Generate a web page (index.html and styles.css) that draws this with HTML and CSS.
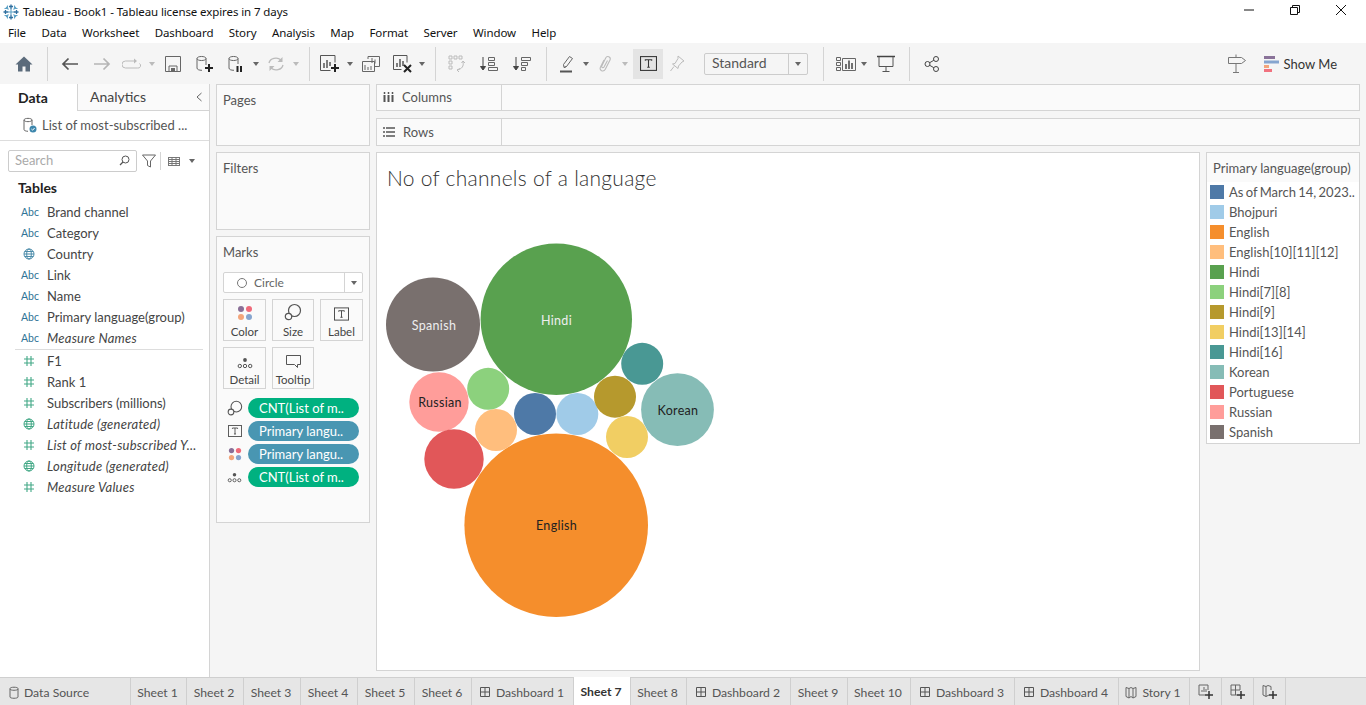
FILE: index.html
```html
<!DOCTYPE html>
<html>
<head>
	<meta charset="utf-8">
	<title>Tableau - Book1</title>
	<link rel="stylesheet" href="styles.css">
</head>
<body>
<svg class="defs" width="0" height="0">
	<symbol id="caret" viewBox="0 0 8 6"><path d="M1 1h6L4 5z" fill="currentColor"/></symbol>
	<symbol id="globe" viewBox="0 0 12 12"><g fill="none" stroke="currentColor"><circle cx="6" cy="6" r="5"/><ellipse cx="6" cy="6" rx="2.3" ry="5"/><path d="M1 6h10M1.8 3.5h8.4M1.8 8.5h8.4"/></g></symbol>
	<symbol id="hash" viewBox="0 0 12 12"><path d="M4 1v10M8 1v10M1 4h10M1 8h10" fill="none" stroke="currentColor" stroke-width="1.1"/></symbol>
	<symbol id="t-box" viewBox="0 0 16 14"><rect x=".5" y=".5" width="15" height="13" fill="none" stroke="currentColor"/><path d="M5 4.5V3.5h6v1M8 3.5v7M6.8 10.5h2.4" fill="none" stroke="currentColor"/></symbol>
	<symbol id="dash" viewBox="0 0 12 12"><path d="M1.5 1.5h9v9h-9zM6 1.500v9M1.5 6h9" fill="none" stroke="currentColor"/></symbol>
	<symbol id="size" viewBox="0 0 18 18"><circle cx="10.5" cy="7.5" r="6" fill="none" stroke="currentColor" stroke-width="1.2"/><circle cx="4.5" cy="13.5" r="3.2" fill="#fafafa" stroke="currentColor" stroke-width="1.2"/></symbol>
	<symbol id="detail" viewBox="0 0 16 12"><circle cx="8" cy="3" r="1.9" fill="currentColor"/><g fill="none" stroke="currentColor"><circle cx="2.8" cy="9" r="1.7"/><circle cx="8" cy="9" r="1.7"/><circle cx="13.2" cy="9" r="1.7"/></g></symbol>
	<symbol id="color" viewBox="0 0 16 16"><circle cx="4" cy="4" r="3" fill="#8a6f97"/><circle cx="12" cy="4" r="3" fill="#ef6a7a"/><circle cx="4" cy="12" r="3" fill="#f3a57b"/><circle cx="12" cy="12" r="3" fill="#86a5cf"/></symbol>
</svg>

<div class="app">
	<div class="titlebar">
		<svg class="logo" width="16" height="16" viewBox="0 0 16 16"><g stroke="#2f6f9f" stroke-width="1.3"><path d="M8 .5v5M6 2.500h4M8 10.500v5M6 13.500h4M.5 8h5M2.500 6v4M10.500 8h5M13.500 6v4"/></g><g stroke="#5fa3c7" stroke-width="1.1"><path d="M8 5.500v5M5.500 8h5M3 3l2.500 2.500M13 3l-2.500 2.500M3 13l2.500-2.500M13 13l-2.500-2.500M1.500 4.500h3M4.500 1.500v3M11.500 1.500v3M11.500 4.500h3M1.500 11.500h3M4.500 11.500v3M11.500 11.500v3M11.500 11.500h3"/></g></svg>
		<span class="app-name">Tableau - Book1 - Tableau license expires in 7 days</span>
		<div class="winctl">
			<svg width="12" height="12" viewBox="0 0 12 12"><path d="M1 6h10" stroke="#111"/></svg>
			<svg width="12" height="12" viewBox="0 0 12 12"><path d="M1.500 3.500h7v7h-7zM3.500 3.500v-2h7v7h-2" fill="none" stroke="#111"/></svg>
			<svg width="12" height="12" viewBox="0 0 12 12"><path d="M1 1l10 10M11 1L1 11" stroke="#111"/></svg>
		</div>
	</div>

	<div class="menubar">
		<span>File</span><span>Data</span><span>Worksheet</span><span>Dashboard</span><span>Story</span><span>Analysis</span><span>Map</span><span>Format</span><span>Server</span><span>Window</span><span>Help</span>
	</div>

	<div class="toolbar">
		<div class="tb w32"><svg width="18" height="16" viewBox="0 0 18 16"><path d="M9 .5L.5 8.500H3V15.500h4.500V10.500h3V15.500H15V8.500h2.500z" fill="#5b6b7b"/></svg></div>
		<i class="sep s7"></i>
		<div class="tb w32 ml6"><svg width="18" height="14" viewBox="0 0 18 14"><path d="M17 7H2M7.500 1.500L2 7l5.500 5.500" fill="none" stroke="#555" stroke-width="1.700"/></svg></div>
		<div class="tb w32"><svg width="18" height="14" viewBox="0 0 18 14"><path d="M1 7h15M10.500 1.500L16 7l-5.500 5.500" fill="none" stroke="#b5b5b5" stroke-width="1.700"/></svg></div>
		<div class="tb w28"><svg width="20" height="12" viewBox="0 0 20 12"><path d="M13 3H3.500a2.500 2.500 0 0 0 0 7h12a2.500 2.500 0 0 0 2-4.500" fill="none" stroke="#bbb"/><path d="M12 .5l3 2.500-3 2.500z" fill="#bbb"/></svg></div>
		<svg class="car w12 off"><use href="#caret"/></svg>
		<div class="tb w30"><svg width="16" height="16" viewBox="0 0 16 16"><path d="M.5.500h15v15H.5zM4 15V10h8v5" fill="none" stroke="#666"/><path d="M6 12h4v3H6z" fill="#666"/></svg></div>
		<div class="tb w34"><svg width="18" height="18" viewBox="0 0 18 18"><path d="M1 3.500C1 .8 10 .8 10 3.500V10M1 3.500V13c0 1.500 2 2.300 5 2.300M1 3.500c0 2.700 9 2.700 9 0" fill="none" stroke="#666"/><path d="M13 9v8M9 13h8" stroke="#222" stroke-width="2"/></svg></div>
		<div class="tb w28"><svg width="18" height="18" viewBox="0 0 18 18"><path d="M2 3.500C2 .8 11 .8 11 3.500V9M2 3.500V13c0 1.500 2 2.300 5 2.300M2 3.500c0 2.700 9 2.700 9 0" fill="none" stroke="#666"/><path d="M10.500 11v6M14 11v6" stroke="#222" stroke-width="2"/></svg></div>
		<svg class="car w12"><use href="#caret"/></svg>
		<div class="tb w28"><svg width="18" height="16" viewBox="0 0 18 16"><path d="M2 7a7 6 0 0 1 12-3M16 9a7 6 0 0 1-12 3" fill="none" stroke="#bbb" stroke-width="1.300"/><path d="M15.500 1v5h-5zM2.500 15v-5h5z" fill="#bbb"/></svg></div>
		<svg class="car w12 off"><use href="#caret"/></svg>
		<i class="sep s7"></i>
		<div class="tb w32 ml4"><svg width="20" height="18" viewBox="0 0 20 18"><path d="M15 .5H.5v15h10" fill="none" stroke="#555"/><path d="M15 .5v7" stroke="#555"/><path d="M4 8v5M7 5v8M10 7v4" stroke="#555" stroke-width="1.500"/><path d="M15 9v8M11 13h8" stroke="#222" stroke-width="2"/></svg></div>
		<svg class="car w8"><use href="#caret"/></svg>
		<div class="tb w34"><svg width="18" height="16" viewBox="0 0 18 16"><path d="M6 3V.5h11.500v10H13M.5 5.500h12v10H.5z" fill="#f5f5f5" stroke="#666"/><path d="M10 2v5M13 3.500v4M3 9v5M6 11v3M9 10v4" stroke="#666"/></svg></div>
		<div class="tb w30"><svg width="20" height="18" viewBox="0 0 20 18"><path d="M14 .5H.5v14h8" fill="none" stroke="#555"/><path d="M14 .5v7" stroke="#555"/><path d="M4 8v4M7 4v8M10 6v5" stroke="#555" stroke-width="1.500"/><path d="M11 10l7 7M18 10l-7 7" stroke="#222" stroke-width="2"/></svg></div>
		<svg class="car w8"><use href="#caret"/></svg>
		<i class="sep s9"></i>
		<div class="tb w30 ml6"><svg width="18" height="18" viewBox="0 0 18 18"><path d="M1 1h3v3H1zM6 1h3v3H6zM11 1h3v3h-3zM1 6h3v3H1zM1 11h3v3H1z" fill="none" stroke="#bbb"/><path d="M15 7c1 4-1 7-6 8M12 13.500L9 15l2 2M13.500 8L15 6l2 2" fill="none" stroke="#bbb"/></svg></div>
		<div class="tb w34"><svg width="18" height="16" viewBox="0 0 18 16"><path d="M3 1v12M.5 10.500L3 14l2.500-3.500z" fill="#444" stroke="#444"/><path d="M8.500 1.500h6v3h-6zM8.500 6.500h6v3h-6zM8.500 11.500h9v3h-9z" fill="none" stroke="#666"/></svg></div>
		<div class="tb w32"><svg width="18" height="16" viewBox="0 0 18 16"><path d="M3 1v12M.5 10.500L3 14l2.500-3.500z" fill="#444" stroke="#444"/><path d="M8.500 1.500h9v3h-9zM8.500 6.500h6v3h-6zM8.500 11.500h4v3h-4z" fill="none" stroke="#666"/></svg></div>
		<i class="sep s8"></i>
		<div class="tb w30 ml5"><svg width="16" height="18" viewBox="0 0 16 18"><path d="M5 12.500l-.5-3L10.500 1.500l3 2L7.500 11.500zM5 12.500l2.500-1" fill="none" stroke="#666"/><path d="M1 16.500h12" stroke="#555" stroke-width="2"/></svg></div>
		<svg class="car w8"><use href="#caret"/></svg>
		<div class="tb w30"><svg width="14" height="18" viewBox="0 0 14 18"><path d="M6 5L2.500 12c-1.800 3.500 3 5.500 4.800 2.200L12 5c1.300-3-3-4.800-4.300-2L3.800 11c-.7 1.500 1.400 2.400 2.200 1L9.500 5.500" fill="none" stroke="#bbb" stroke-width="1.100"/></svg></div>
		<svg class="car w10 off"><use href="#caret"/></svg>
		<div class="tb w30 active ml3"><svg width="17" height="15" color="#333"><use href="#t-box"/></svg></div>
		<div class="tb w28"><svg width="16" height="18" viewBox="0 0 16 18"><path d="M9 1l6 5-2 1-3.500 4L9 13.500 3.500 9l2.500-.5L9 3.500zM5 11.500L1.500 16" fill="none" stroke="#bbb"/></svg></div>
		<div class="std-select">
			<span>Standard</span>
			<div class="std-drop"><svg class="car w8"><use href="#caret"/></svg></div>
		</div>
		<i class="sep s15"></i>
		<div class="tb w28 ml8"><svg width="20" height="16" viewBox="0 0 20 16"><path d="M.5 1.500h4v3h-4zM.5 6.500h4v3h-4zM.5 11.500h4v3h-4zM6.500 2.500h13v12h-13z" fill="none" stroke="#666"/><path d="M10 8v5M13 4.500V13M16 7v6" stroke="#444" stroke-width="1.500"/></svg></div>
		<svg class="car w8"><use href="#caret"/></svg>
		<div class="tb w36"><svg width="18" height="18" viewBox="0 0 18 18"><path d="M0 1.500h18" stroke="#444" stroke-width="1.500"/><path d="M2 2v9.500h14V2M9 11.500v5M5.500 16.500h7" fill="none" stroke="#555"/></svg></div>
		<i class="sep s5"></i>
		<div class="tb w32 ml6"><svg width="16" height="16" viewBox="0 0 16 16"><g fill="none" stroke="#444"><circle cx="3.500" cy="8" r="2.500"/><circle cx="12" cy="3" r="2.500"/><circle cx="12" cy="13" r="2.500"/><path d="M5.700 6.700l4.100-2.400M5.700 9.300l4.100 2.400"/></g></svg></div>
		<div class="tb-right">
			<svg width="18" height="20" viewBox="0 0 18 20"><path d="M.5 3.500h13l4 3-4 3H.5zM8 .5v3M8 9.500v9M5 18.500h6" fill="none" stroke="#777"/></svg>
			<span class="showme">
				<svg width="15" height="16" viewBox="0 0 15 16"><path d="M0 0h11v3H0z" fill="#8a7399"/><path d="M0 4.500h15v3H0z" fill="#86a5cf"/><path d="M0 9h5v3H0z" fill="#f3a57b"/><path d="M0 13h8v3H0z" fill="#f1727f"/></svg>
				Show Me
			</span>
		</div>
	</div>

	<div class="main">
		<div class="datapane">
			<div class="pane-tabs">
				<div class="pane-tab selected">Data</div>
				<div class="pane-tab">Analytics<svg class="chev" width="8" height="10" viewBox="0 0 8 10"><path d="M6.500 1L2 5l4.500 4" fill="none" stroke="#666"/></svg></div>
			</div>
			<div class="source">
				<svg width="14" height="16" viewBox="0 0 14 16"><path d="M1 3C1 .8 9 .8 9 3v5M1 3v9.500c0 1 1.500 1.700 4 1.800M1 3c0 2.200 8 2.200 8 0" fill="none" stroke="#666"/><circle cx="10" cy="12" r="3.500" fill="#3d87ad"/><path d="M8.400 12l1.200 1.200 2-2.200" fill="none" stroke="#fff"/></svg>
				<span>List of most-subscribed ...</span>
			</div>
			<div class="search-row">
				<div class="search">
					<span>Search</span>
					<svg width="11" height="11" viewBox="0 0 11 11"><circle cx="6.500" cy="4.500" r="3.500" fill="none" stroke="#555"/><path d="M4 7l-3 3" stroke="#555" stroke-width="1.300"/></svg>
				</div>
				<svg class="funnel" width="14" height="14" viewBox="0 0 14 14"><path d="M.5 1h13L8.500 7v6l-3-1.500V7z" fill="none" stroke="#666"/></svg>
				<i class="vsep"></i>
				<svg class="gridic" width="12" height="9" viewBox="0 0 12 9"><path d="M0 .5h12M0 2.500h12M0 4.500h12M0 6.500h12M0 8.500h12M.5 0v9M4 0v9M8 0v9M11.500 0v9" stroke="#777" fill="none"/></svg>
				<svg class="car w8 grid-car"><use href="#caret"/></svg>
			</div>
			<div class="tables">Tables</div>
			<ul class="fields">
				<li><b class="abc">Abc</b>Brand channel</li>
				<li><b class="abc">Abc</b>Category</li>
				<li><svg class="fic dim"><use href="#globe"/></svg>Country</li>
				<li><b class="abc">Abc</b>Link</li>
				<li><b class="abc">Abc</b>Name</li>
				<li><b class="abc">Abc</b>Primary language(group)</li>
				<li class="calc"><b class="abc">Abc</b>Measure Names</li>
			</ul>
			<ul class="fields measures">
				<li><svg class="fic mea"><use href="#hash"/></svg>F1</li>
				<li><svg class="fic mea"><use href="#hash"/></svg>Rank 1</li>
				<li><svg class="fic mea"><use href="#hash"/></svg>Subscribers (millions)</li>
				<li class="calc"><svg class="fic mea"><use href="#globe"/></svg>Latitude (generated)</li>
				<li class="calc"><svg class="fic mea"><use href="#hash"/></svg>List of most-subscribed Y...</li>
				<li class="calc"><svg class="fic mea"><use href="#globe"/></svg>Longitude (generated)</li>
				<li class="calc"><svg class="fic mea"><use href="#hash"/></svg>Measure Values</li>
			</ul>
		</div>

		<div class="workspace">
			<div class="cards">
				<div class="card pages">Pages</div>
				<div class="card filters">Filters</div>
				<div class="card marks">
					Marks
					<div class="mark-type">
						<span class="ring"></span><span class="mark-name">Circle</span>
						<div class="mark-drop"><svg class="car w8"><use href="#caret"/></svg></div>
					</div>
					<div class="mark-btns">
						<div class="mbtn"><svg width="16" height="16"><use href="#color"/></svg>Color</div>
						<div class="mbtn"><svg width="18" height="18" color="#555"><use href="#size"/></svg>Size</div>
						<div class="mbtn"><svg width="15" height="14" color="#444"><use href="#t-box"/></svg>Label</div>
						<div class="mbtn"><svg width="16" height="12" color="#555"><use href="#detail"/></svg>Detail</div>
						<div class="mbtn"><svg width="15" height="15" viewBox="0 0 15 15"><path d="M.5 1.500h14v9h-3v3l-3-3H.5z" fill="none" stroke="#555"/></svg>Tooltip</div>
					</div>
					<div class="pills">
						<div class="pill-row"><svg width="16" height="16" color="#555"><use href="#size"/></svg><span class="pill green">CNT(List of m..</span></div>
						<div class="pill-row"><svg width="14" height="12" color="#444"><use href="#t-box"/></svg><span class="pill blue">Primary langu..</span></div>
						<div class="pill-row"><svg width="14" height="14"><use href="#color"/></svg><span class="pill blue">Primary langu..</span></div>
						<div class="pill-row"><svg width="15" height="11" color="#555"><use href="#detail"/></svg><span class="pill green">CNT(List of m..</span></div>
					</div>
				</div>
			</div>

			<div class="sheet">
				<div class="shelf columns">
					<div class="shelf-name"><svg width="11" height="10" viewBox="0 0 11 10"><path d="M1.500 3v7M5.500 3v7M9.500 3v7" stroke="#555" stroke-width="2"/><path d="M1.500 0v2M5.500 0v2M9.500 0v2" stroke="#555" stroke-width="1.500"/></svg>Columns</div>
				</div>
				<div class="shelf rows">
					<div class="shelf-name"><svg width="12" height="10" viewBox="0 0 12 10"><path d="M0 1h2M3 1h9M0 5h2M3 5h9M0 9h2M3 9h9" stroke="#555" stroke-width="1.600"/></svg>Rows</div>
				</div>
				<div class="view-row">
					<div class="chart">
						<h1 class="chart-title">No of channels of a language</h1>
						<svg class="bubbles" viewBox="377 199 822 471">
							<circle cx="556.3" cy="319.3" r="75.7" fill="#59a14f"/>
							<circle cx="556.2" cy="525.3" r="91.8" fill="#f58e2c"/>
							<circle cx="433" cy="324.5" r="47" fill="#79706e"/>
							<circle cx="439" cy="402" r="29.7" fill="#ff9d9a"/>
							<circle cx="454" cy="459" r="29.7" fill="#e15759"/>
							<circle cx="677.5" cy="409.7" r="36.4" fill="#86bcb6"/>
							<circle cx="488.2" cy="388.8" r="21" fill="#8cd17d"/>
							<circle cx="496" cy="430" r="21" fill="#ffbe7d"/>
							<circle cx="535" cy="414" r="21" fill="#4e79a7"/>
							<circle cx="577.3" cy="414" r="21" fill="#a0cbe8"/>
							<circle cx="615" cy="396.7" r="21" fill="#b6992d"/>
							<circle cx="627" cy="437" r="21" fill="#f1ce63"/>
							<circle cx="642.2" cy="363.8" r="21" fill="#499894"/>
							<text x="556.5" y="325" class="lbl light">Hindi</text>
							<text x="556.5" y="530" class="lbl">English</text>
							<text x="434" y="330" class="lbl light">Spanish</text>
							<text x="440" y="407" class="lbl">Russian</text>
							<text x="678" y="415" class="lbl">Korean</text>
						</svg>
					</div>
					<div class="legend">
						<div class="legend-head">Primary language(group)</div>
						<ul class="legend-list">
							<li><i class="sw c1"></i>As of March 14, 2023..</li>
							<li><i class="sw c2"></i>Bhojpuri</li>
							<li><i class="sw c3"></i>English</li>
							<li><i class="sw c4"></i>English[10][11][12]</li>
							<li><i class="sw c5"></i>Hindi</li>
							<li><i class="sw c6"></i>Hindi[7][8]</li>
							<li><i class="sw c7"></i>Hindi[9]</li>
							<li><i class="sw c8"></i>Hindi[13][14]</li>
							<li><i class="sw c9"></i>Hindi[16]</li>
							<li><i class="sw c10"></i>Korean</li>
							<li><i class="sw c11"></i>Portuguese</li>
							<li><i class="sw c12"></i>Russian</li>
							<li><i class="sw c13"></i>Spanish</li>
						</ul>
					</div>
				</div>
			</div>
		</div>
	</div>

	<div class="tabs">
		<div class="tab t131 ds"><svg width="10" height="13" viewBox="0 0 10 13"><path d="M1 2.500C1 .8 9 .8 9 2.500V11c0 1.700-8 1.700-8 0zM1 3c0 1.700 8 1.700 8 0" fill="none" stroke="#666"/></svg>Data Source</div>
		<div class="tab t56">Sheet 1</div>
		<div class="tab t57">Sheet 2</div>
		<div class="tab t57">Sheet 3</div>
		<div class="tab t57">Sheet 4</div>
		<div class="tab t57">Sheet 5</div>
		<div class="tab t57">Sheet 6</div>
		<div class="tab t102"><svg width="12" height="12"><use href="#dash"/></svg>Dashboard 1</div>
		<div class="tab t57 current">Sheet 7</div>
		<div class="tab t56">Sheet 8</div>
		<div class="tab t104"><svg width="12" height="12"><use href="#dash"/></svg>Dashboard 2</div>
		<div class="tab t57">Sheet 9</div>
		<div class="tab t63">Sheet 10</div>
		<div class="tab t104"><svg width="12" height="12"><use href="#dash"/></svg>Dashboard 3</div>
		<div class="tab t104"><svg width="12" height="12"><use href="#dash"/></svg>Dashboard 4</div>
		<div class="tab t71"><svg width="12" height="13" viewBox="0 0 12 13"><path d="M1 1.500l3 1 2-1 2 1 3-1v9l-3 1.500-2-1.500-2 1.500-3-1.500zM4 2.500v9.500M8 2.500v9.500" fill="none" stroke="#666"/></svg>Story 1</div>
		<div class="tab t32 add"><svg width="16" height="16" viewBox="0 0 16 16"><path d="M10 1H1v10h6M10 1v5M4 8V6M6 8V3M8 8V5" fill="none" stroke="#666"/><path d="M11 7v8M7 11h8" stroke="#333" stroke-width="1.500"/></svg></div>
		<div class="tab t32 add"><svg width="16" height="16" viewBox="0 0 16 16"><path d="M10 6V1H1v10h6M1 6h9M5.500 1v10" fill="none" stroke="#666"/><path d="M11 7v8M7 11h8" stroke="#333" stroke-width="1.500"/></svg></div>
		<div class="tab t32 add"><svg width="16" height="16" viewBox="0 0 16 16"><path d="M1 1.500l3 1 2-1 3 1V6M1 1.500V11l3 1.500 3-1.500M4 2.500v10" fill="none" stroke="#666"/><path d="M11 7v8M7 11h8" stroke="#333" stroke-width="1.500"/></svg></div>
	</div>
</div>
</body>
</html>
```

FILE: styles.css
```css
* {
	box-sizing: border-box;
}

body {
	margin: 0;
	background-color: #fff;
	font-family: "Lato", "Liberation Sans", sans-serif;
	font-size: 13px;
	color: #444;
	overflow: hidden;
}

ul {
	list-style: none;
	margin: 0;
	padding: 0;
}

.defs {
	position: absolute;
}

.app {
	display: flex;
	flex-direction: column;
	width: 1366px;
	height: 705px;
}

/* ########## title + menu */
.titlebar {
	display: flex;
	align-items: center;
	height: 21px;
	padding: 2px 0 0 3px;
	font-family: "Noto Sans", sans-serif;
	font-size: 11.5px;
	letter-spacing: -0.1px;
	color: #111;
}

.app-name {
	margin-left: 4px;
}

.winctl {
	display: flex;
	gap: 34px;
	margin-left: auto;
	margin-right: 19px;
	margin-top: -3px;
}

.menubar {
	display: flex;
	gap: 15.5px;
	align-items: center;
	height: 22px;
	padding: 1px 0 0 8px;
	font-family: "Noto Sans", sans-serif;
	font-size: 11.5px;
	letter-spacing: -0.1px;
	color: #111;
}

/* ########## toolbar */
.toolbar {
	display: flex;
	align-items: center;
	height: 41px;
	padding-left: 8px;
	background-color: #f5f5f5;
}

.tb {
	display: flex;
	align-items: center;
	justify-content: center;
	flex: none;
	height: 30px;
}

.active {
	background-color: #e4e4e4;
}

.w28 { width: 28px; }
.w30 { width: 30px; }
.w32 { width: 32px; }
.w34 { width: 34px; }
.w36 { width: 36px; }
.ml3 { margin-left: 3px; }
.ml4 { margin-left: 4px; }
.ml5 { margin-left: 5px; }
.ml6 { margin-left: 6px; }
.ml8 { margin-left: 8px; }

.sep {
	flex: none;
	width: 1px;
	height: 34px;
	background-color: #d4d4d4;
}

.s5 { margin-left: 5px; }
.s7 { margin-left: 7px; }
.s8 { margin-left: 8px; }
.s9 { margin-left: 9px; }
.s15 { margin-left: 15px; }

.car {
	flex: none;
	height: 6px;
	color: #666;
}

.car.w8 { width: 8px; }
.car.w10 { width: 10px; }
.car.w12 { width: 12px; }
.off { color: #bbb; }

.std-select {
	display: flex;
	align-items: center;
	justify-content: space-between;
	flex: none;
	width: 104px;
	height: 22px;
	margin-left: 13px;
	padding-left: 7px;
	border: 1px solid #ccc;
	border-radius: 2px;
	font-size: 14px;
	color: #555;
}

.std-select span {
	margin-top: -2px;
}

.std-drop {
	display: flex;
	align-items: center;
	justify-content: center;
	width: 19px;
	height: 100%;
	border-left: 1px solid #ccc;
}

.tb-right {
	display: flex;
	align-items: center;
	gap: 18px;
	margin-left: auto;
	margin-right: 29px;
}

.showme {
	display: flex;
	align-items: center;
	gap: 5px;
	font-size: 13px;
	color: #333;
}

/* ########## left data pane */
.main {
	display: flex;
	flex: 1;
	min-height: 0;
}

.datapane {
	flex: none;
	width: 210px;
	border-right: 1px solid #d4d4d4;
	background-color: #fff;
}

.pane-tabs {
	display: flex;
	height: 27px;
}

.pane-tab {
	display: flex;
	align-items: center;
	flex: 1;
	padding: 0 0 1px 12px;
	font-size: 14px;
	border-left: 1px solid #d4d4d4;
	border-bottom: 1px solid #d4d4d4;
	background-color: #fafafa;
}

.pane-tab.selected {
	flex: none;
	width: 77px;
	padding-left: 18px;
	border: 0;
	background-color: #fff;
	font-weight: 700;
	color: #222;
}

.chev {
	margin-left: auto;
	margin-right: 6px;
}

.source {
	display: flex;
	align-items: center;
	gap: 5px;
	height: 30px;
	padding: 0 0 2px 23px;
	border-bottom: 1px solid #ddd;
	color: #555;
}

.search-row {
	display: flex;
	align-items: center;
	height: 22px;
	margin-top: 9px;
	padding-left: 8px;
}

.search {
	display: flex;
	align-items: center;
	justify-content: space-between;
	width: 129px;
	height: 22px;
	padding: 0 6px 2px;
	border: 1px solid #ccc;
	border-radius: 2px;
	color: #aaa;
}

.funnel {
	margin-left: 5px;
}

.vsep {
	width: 1px;
	height: 18px;
	margin-left: 4px;
	background-color: #d4d4d4;
}

.gridic {
	margin-left: 7px;
}

.grid-car {
	margin-left: 8px;
}

.tables {
	margin-top: 7px;
	padding-left: 18px;
	font-size: 14px;
	font-weight: 700;
	line-height: 18px;
	color: #222;
}

.fields {
	margin-top: 4px;
}

.fields li {
	display: flex;
	align-items: center;
	height: 21px;
	color: #444;
}

.fields .calc {
	font-style: italic;
	letter-spacing: 0.25px;
}

.measures {
	margin: 1px 6px 0 15px;
	border-top: 1px solid #ddd;
}

.measures li {
	margin-left: -15px;
}

.abc {
	flex: none;
	width: 47px;
	padding-left: 21px;
	font-size: 10.5px;
	font-weight: 400;
	font-style: normal;
	letter-spacing: 0;
	color: #2f7396;
}

.fic {
	flex: none;
	width: 12px;
	height: 12px;
	margin: 0 12px 0 23px;
}

.dim { color: #4c8caa; }
.mea { color: #42a886; }

/* ########## shelves */
.workspace {
	display: flex;
	flex: 1;
	gap: 6px;
	padding: 0 6px;
	background-color: #f5f5f5;
}

.cards {
	display: flex;
	flex-direction: column;
	flex: none;
	gap: 6px;
	width: 154px;
}

.card {
	padding: 8px 6px;
	border: 1px solid #d4d4d4;
	background-color: #fafafa;
	font-size: 13px;
	line-height: 15px;
	color: #555;
}

.pages { height: 62px; }
.filters { height: 78px; }
.marks { height: 287px; }

.mark-type {
	display: flex;
	align-items: center;
	height: 21px;
	margin-top: 12px;
	padding-left: 13px;
	border: 1px solid #d4d4d4;
	border-radius: 2px;
	background-color: #fff;
	font-size: 12px;
	color: #666;
}

.ring {
	width: 10px;
	height: 10px;
	border: 1px solid #777;
	border-radius: 50%;
}

.mark-name {
	margin-left: 7px;
}

.mark-drop {
	display: flex;
	align-items: center;
	justify-content: center;
	width: 18px;
	height: 100%;
	margin-left: auto;
	border-left: 1px solid #d4d4d4;
}

.mark-btns {
	display: grid;
	grid-template-columns: 43px 42px 43px;
	grid-auto-rows: 42px;
	gap: 6px;
	width: 140px;
	margin-top: 6px;
}

.mbtn {
	display: flex;
	flex-direction: column;
	align-items: center;
	justify-content: flex-end;
	gap: 4px;
	padding-bottom: 1px;
	border: 1px solid #d4d4d4;
	font-size: 11.5px;
	line-height: 14px;
	color: #444;
}

.pills {
	display: flex;
	flex-direction: column;
	gap: 3px;
	margin-top: 9px;
}

.pill-row {
	position: relative;
	display: flex;
	align-items: center;
	justify-content: center;
	width: 136px;
	height: 20px;
	padding-right: 113px;
}

.pill {
	position: absolute;
	left: 25px;
	width: 111px;
	height: 20px;
	padding-left: 11px;
	border-radius: 10px;
	font-size: 13px;
	line-height: 20px;
	color: #fff;
	white-space: nowrap;
}

.green { background-color: #00b180; }
.blue { background-color: #4996b2; }

/* ########## sheet */
.sheet {
	display: flex;
	flex-direction: column;
	flex: 1;
	min-width: 0;
}

.shelf {
	flex: none;
	border: 1px solid #d4d4d4;
	background-color: #fafafa;
}

.columns {
	height: 27px;
}

.rows {
	height: 28px;
	margin-top: 7px;
}

.shelf-name {
	display: flex;
	align-items: center;
	gap: 8px;
	width: 125px;
	height: 100%;
	padding: 0 0 1px 6px;
	border-right: 1px solid #d4d4d4;
	color: #555;
}

.view-row {
	display: flex;
	gap: 6px;
	height: 519px;
	margin-top: 6px;
}

.chart {
	flex: none;
	width: 824px;
	border: 1px solid #d4d4d4;
	background-color: #fff;
}

.chart-title {
	height: 46px;
	margin: 0;
	padding: 13px 0 0 10px;
	font-size: 21px;
	font-weight: 300;
	letter-spacing: 0.27px;
	line-height: 24px;
	color: #333;
}

.bubbles {
	display: block;
	width: 822px;
	height: 471px;
}

.lbl {
	font-family: "Lato", sans-serif;
	font-size: 12.5px;
	letter-spacing: 0.3px;
	text-anchor: middle;
	fill: #222;
}

.lbl.light {
	fill: #eee;
}

.legend {
	flex: none;
	width: 154px;
	height: 292px;
	border: 1px solid #d4d4d4;
	background-color: #fff;
}

.legend-head {
	height: 29px;
	padding: 8px 0 0 6px;
	background-color: #fafafa;
	font-size: 13px;
	line-height: 15px;
	color: #555;
	white-space: nowrap;
}

.legend-list {
	padding-left: 3px;
}

.legend-list li {
	display: flex;
	align-items: center;
	gap: 5px;
	height: 20px;
	font-size: 13px;
	word-spacing: -1px;
	color: #555;
	white-space: nowrap;
}

.sw {
	flex: none;
	width: 14px;
	height: 14px;
}

.c1 { background-color: #4e79a7; }
.c2 { background-color: #a0cbe8; }
.c3 { background-color: #f58e2c; }
.c4 { background-color: #ffbe7d; }
.c5 { background-color: #59a14f; }
.c6 { background-color: #8cd17d; }
.c7 { background-color: #b6992d; }
.c8 { background-color: #f1ce63; }
.c9 { background-color: #499894; }
.c10 { background-color: #86bcb6; }
.c11 { background-color: #e15759; }
.c12 { background-color: #ff9d9a; }
.c13 { background-color: #79706e; }

/* ########## bottom tabs */
.tabs {
	display: flex;
	flex: none;
	height: 28px;
	border-top: 1px solid #cfcfcf;
	background-color: #e6e6e6;
}

.tab {
	display: flex;
	align-items: center;
	justify-content: center;
	flex: none;
	gap: 5px;
	padding: 1px 2px 0 0;
	border-right: 1px solid #cfcfcf;
	font-size: 12.2px;
	color: #555;
	white-space: nowrap;
}

.tab.add {
	padding: 0;
}

.tab.ds {
	justify-content: flex-start;
	padding-left: 9px;
}

.tab.current {
	margin-top: -1px;
	padding: 0 2px 0 0;
	background-color: #fff;
	font-weight: 700;
	color: #333;
}

.t32 { width: 32px; }
.t56 { width: 56px; }
.t57 { width: 57px; }
.t63 { width: 63px; }
.t71 { width: 71px; }
.t102 { width: 102px; }
.t104 { width: 104px; }
.t131 { width: 131px; }
```
